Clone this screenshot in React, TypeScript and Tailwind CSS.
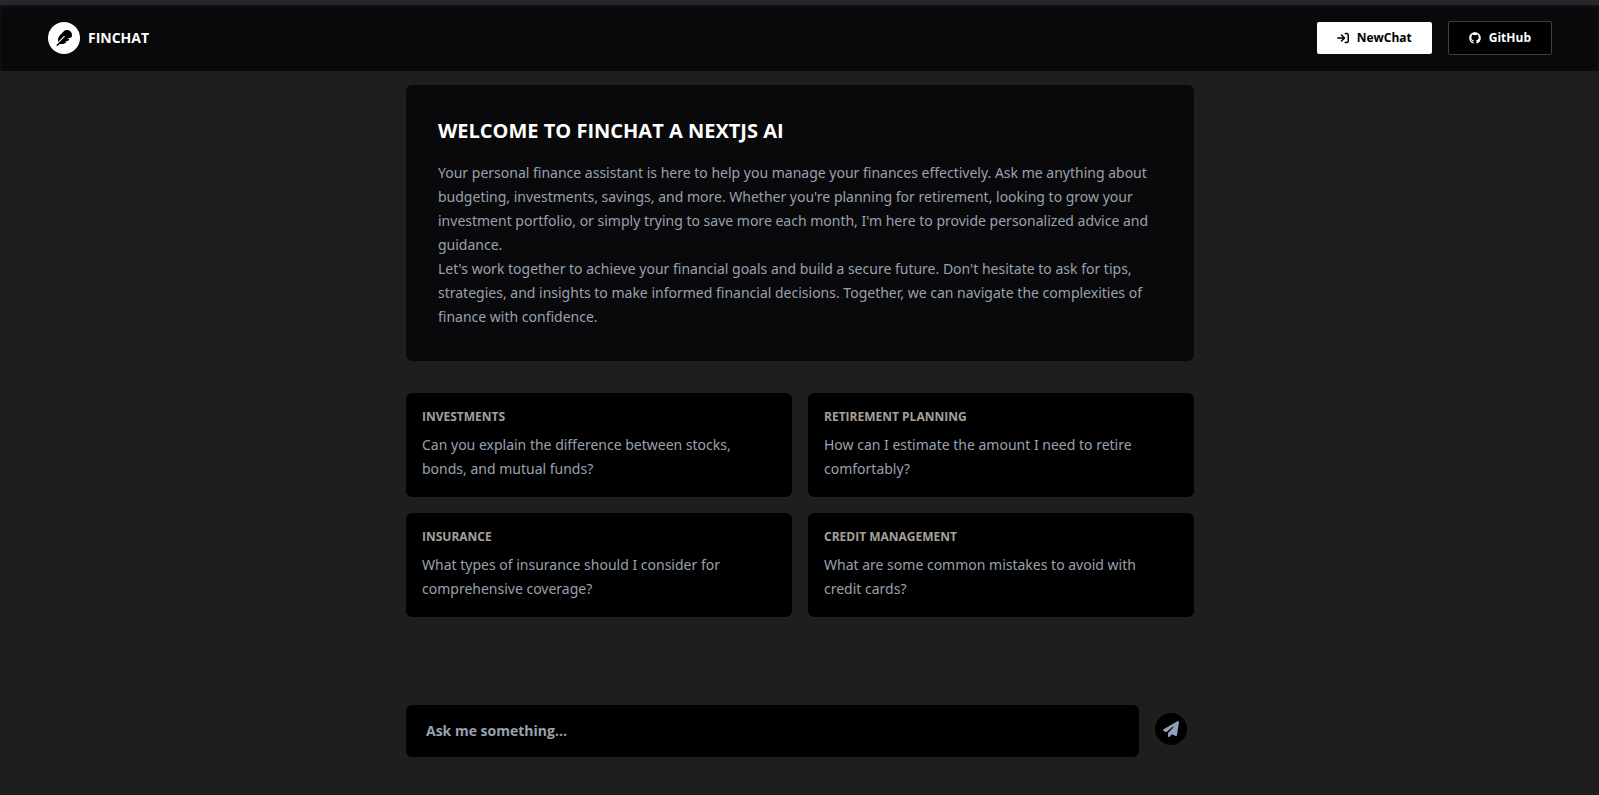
import React from "react";
import { FaArrowRightToBracket, FaFeather, FaGithub, FaPaperPlane } from "react-icons/fa6";

const prompts = [
  { title: "Investments", text: "Can you explain the difference between stocks, bonds, and mutual funds?" },
  { title: "Retirement Planning", text: "How can I estimate the amount I need to retire comfortably?" },
  { title: "Insurance", text: "What types of insurance should I consider for comprehensive coverage?" },
  { title: "Credit Management", text: "What are some common mistakes to avoid with credit cards?" },
];

function Header() {
  return (
    <header className="flex items-center justify-between border-t-5 border-[#22282d] bg-[#09090b] py-4 pr-[47px] pl-12 shadow-[inset_0_2px_5px_#1a1412]">
      <a href="#" className="flex items-center gap-2 text-white">
        <span className="flex size-8 items-center justify-center rounded-full bg-white text-black">
          <FaFeather className="size-4" />
        </span>
        <span className="text-sm font-bold">FINCHAT</span>
      </a>
      <nav className="flex items-center gap-4 text-xs font-bold">
        <button type="button" className="flex items-center gap-2 rounded-xs bg-white px-5 py-2 text-black">
          <FaArrowRightToBracket className="size-3" />
          NewChat
        </button>
        <a href="#" className="flex items-center gap-2 rounded-xs border border-[#44403c] bg-black px-5 py-2 text-white">
          <FaGithub className="size-3" />
          GitHub
        </a>
      </nav>
    </header>
  );
}

export default function App() {
  return (
    <div className="flex min-h-screen flex-col bg-[#1e1e1e] font-['Open_Sans',sans-serif]">
      <Header />
      <main className="flex grow flex-col pt-3.5 pl-px">
        <div className="mx-auto flex w-full max-w-[788px] grow flex-col">
          <section className="rounded-md bg-[#09090b] p-8">
            <h1 className="mb-4 text-xl font-bold text-white">WELCOME TO FINCHAT A NEXTJS AI</h1>
            <div className="font-['Noto_Sans',sans-serif] text-sm/6 text-gray-400">
              <p>
                Your personal finance assistant is here to help you manage your finances effectively. Ask me anything
                about budgeting, investments, savings, and more. Whether you're planning for retirement, looking to
                grow your investment portfolio, or simply trying to save more each month, I'm here to provide
                personalized advice and guidance.
              </p>
              <p>
                Let's work together to achieve your financial goals and build a secure future. Don't hesitate to ask
                for tips, strategies, and insights to make informed financial decisions. Together, we can navigate the
                complexities of finance with confidence.
              </p>
            </div>
          </section>
          <section className="mt-8 grid grid-cols-2 gap-4">
            {prompts.map((p) => (
              <button key={p.title} type="button" className="rounded-md bg-black py-4 pr-6 pl-4 text-left">
                <span className="mb-2 block text-xs font-bold text-stone-400 uppercase">{p.title}</span>
                <span className="block font-['Noto_Sans',sans-serif] text-sm/6 text-gray-400">{p.text}</span>
              </button>
            ))}
          </section>
          <form className="mt-auto mb-[38px] flex items-start gap-4 pr-[7px]" onSubmit={(e) => e.preventDefault()}>
            <input
              type="text"
              aria-label="Message"
              placeholder="Ask me something..."
              className="h-13 min-w-0 grow rounded-md bg-black px-5 pb-0.5 text-sm font-bold text-gray-400 outline-none placeholder:text-gray-400"
            />
            <button
              type="submit"
              aria-label="Send"
              className="mt-2 flex size-8 items-center justify-center rounded-full bg-black text-slate-400"
            >
              <FaPaperPlane className="size-4" />
            </button>
          </form>
        </div>
      </main>
    </div>
  );
}
